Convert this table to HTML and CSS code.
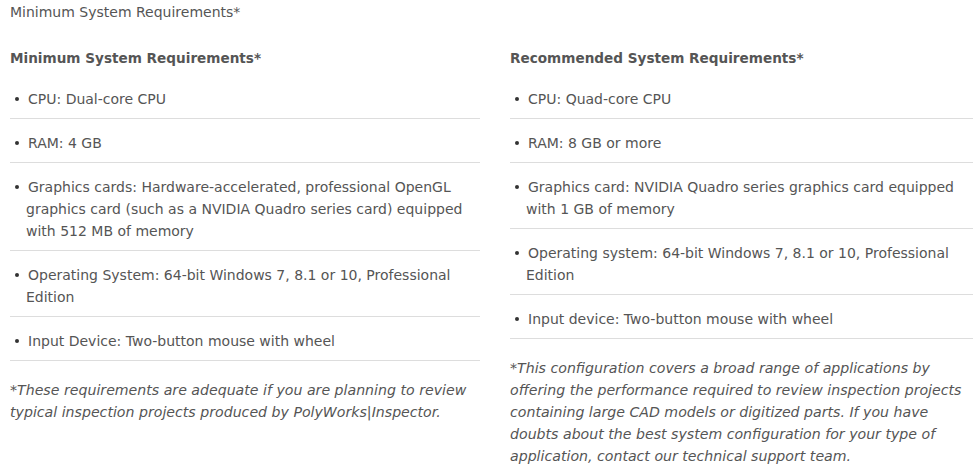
FILE: index.html
```html
<!DOCTYPE html>
<html>
<head>
<meta charset="utf-8">
<link rel="stylesheet" href="styles.css">
</head>
<body>
<div class="page">
  <p class="intro">Minimum System Requirements*</p>
  <div class="cols">
    <section class="col">
      <h3 class="col-title">Minimum System Requirements*</h3>
      <ul class="reqs">
        <li>CPU: Dual-core CPU</li>
        <li>RAM: 4 GB</li>
        <li>Graphics cards: Hardware-accelerated, professional OpenGL graphics card (such as a NVIDIA Quadro series card) equipped with 512 MB of memory</li>
        <li>Operating System: 64-bit Windows 7, 8.1 or 10, Professional Edition</li>
        <li>Input Device: Two-button mouse with wheel</li>
      </ul>
      <p class="note">*These requirements are adequate if you are planning to review typical inspection projects produced by PolyWorks|Inspector.</p>
    </section>
    <section class="col">
      <h3 class="col-title">Recommended System Requirements*</h3>
      <ul class="reqs">
        <li>CPU: Quad-core CPU</li>
        <li>RAM: 8 GB or more</li>
        <li>Graphics card: NVIDIA Quadro series graphics card equipped with 1 GB of memory</li>
        <li>Operating system: 64-bit Windows 7, 8.1 or 10, Professional Edition</li>
        <li>Input device: Two-button mouse with wheel</li>
      </ul>
      <p class="note">*This configuration covers a broad range of applications by offering the performance required to review inspection projects containing large CAD models or digitized parts. If you have doubts about the best system configuration for your type of application, contact our technical support team.</p>
    </section>
  </div>
</div>
</body>
</html>
```
FILE: styles.css
```css
html, body {
  margin: 0;
  padding: 0;
  background: #fff;
}
body {
  font-family: Verdana, "DejaVu Sans", sans-serif;
  font-size: 14px;
  line-height: 22px;
  color: #555;
  overflow: hidden;
}
.page {
  padding: 1px 0 0 10px;
}
.intro {
  margin: 0;
}
.cols {
  display: grid;
  grid-template-columns: 470px minmax(0, 1fr);
  column-gap: 30px;
  margin-top: 24px;
}
.col-title {
  margin: 0 0 6px;
  font-size: 13.6px;
  font-weight: bold;
  line-height: 22px;
  color: #555;
}
.reqs {
  list-style: none;
  margin: 0;
  padding: 0;
}
.reqs li {
  padding: 12.5px 0 8.5px 16px;
  border-bottom: 1px solid #ddd;
  text-indent: -11px;
}
.reqs li::before {
  content: "";
  display: inline-block;
  width: 4px;
  height: 4px;
  border-radius: 50%;
  background: #333;
  vertical-align: middle;
  margin: -2px 9px 0 0;
}
.note {
  margin: 17.5px 0 0;
  font-style: italic;
  font-size: 14.15px;
}
```
